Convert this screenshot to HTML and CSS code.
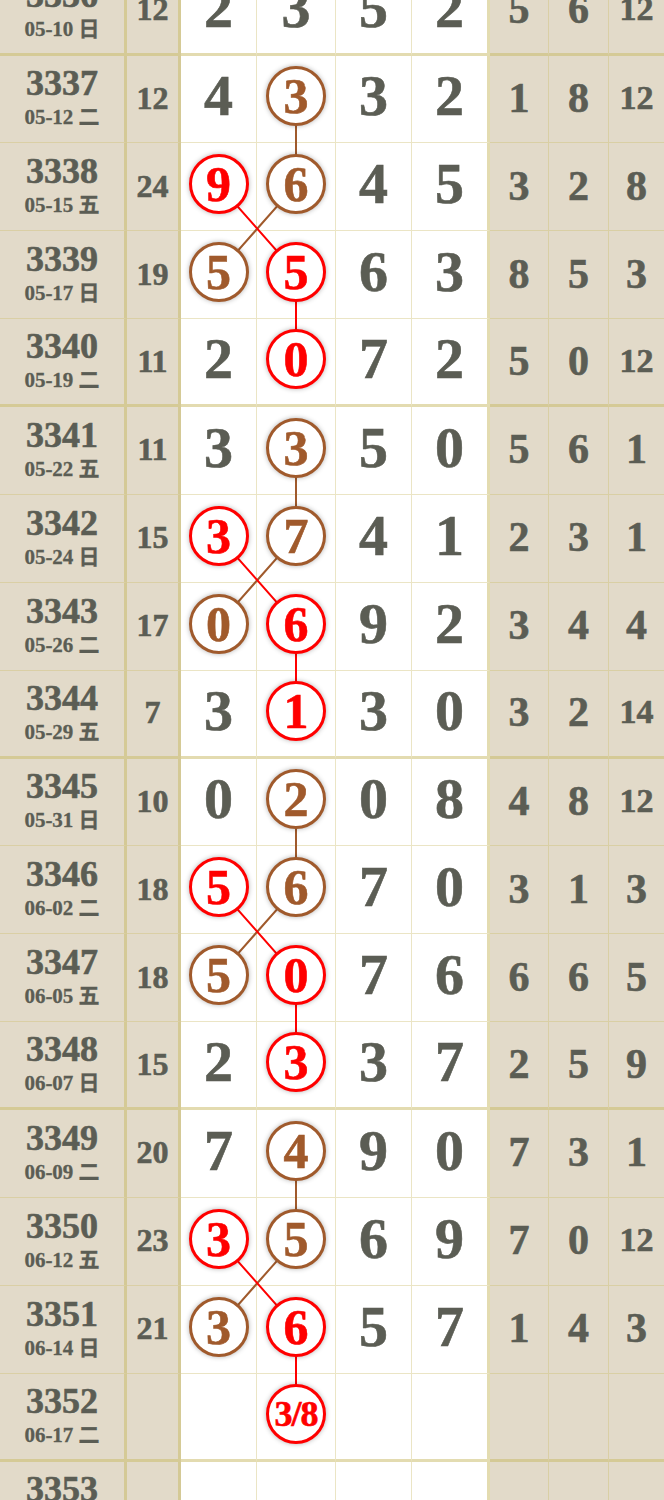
FILE: index.html
```html
<!DOCTYPE html>
<html lang="zh">
<head>
    <meta charset="UTF-8">
    <title>走势图</title>
    <link rel="stylesheet" href="styles.css">
</head>
<body>

<div class="chart">
    <svg class="links" width="664" height="1582" viewBox="0 0 664 1582">
        <g class="brown">
            <path d="M296 128.9 V216.8 L218.5 304.6"/>
            <path d="M296 480.4 V568.3 L218.5 656.1"/>
            <path d="M296 831.9 V919.8 L218.5 1007.6"/>
            <path d="M296 1183.4 V1271.3 L218.5 1359.1"/>
        </g>
        <g class="red">
            <path d="M218.5 216.8 L296 304.6 V392.5"/>
            <path d="M218.5 568.3 L296 656.1 V744"/>
            <path d="M218.5 919.8 L296 1007.6 V1095.5"/>
            <path d="M218.5 1271.3 L296 1359.1 V1447"/>
        </g>
    </svg>

    <div class="row end">
        <div class="c issue"><b>3336</b><small>05-10 日</small></div>
        <div class="c sum">12</div>
        <div class="c n">2</div><div class="c n">3</div><div class="c n">5</div><div class="c n last">2</div>
        <div class="c s">5</div><div class="c s">6</div><div class="c s dd">12</div>
    </div>

    <div class="row">
        <div class="c issue"><b>3337</b><small>05-12 二</small></div>
        <div class="c sum">12</div>
        <div class="c n">4</div><div class="c n"><span class="ball b">3</span></div><div class="c n">3</div><div class="c n last">2</div>
        <div class="c s">1</div><div class="c s">8</div><div class="c s dd">12</div>
    </div>
    <div class="row">
        <div class="c issue"><b>3338</b><small>05-15 五</small></div>
        <div class="c sum">24</div>
        <div class="c n"><span class="ball r">9</span></div><div class="c n"><span class="ball b">6</span></div><div class="c n">4</div><div class="c n last">5</div>
        <div class="c s">3</div><div class="c s">2</div><div class="c s">8</div>
    </div>
    <div class="row">
        <div class="c issue"><b>3339</b><small>05-17 日</small></div>
        <div class="c sum">19</div>
        <div class="c n"><span class="ball b">5</span></div><div class="c n"><span class="ball r">5</span></div><div class="c n">6</div><div class="c n last">3</div>
        <div class="c s">8</div><div class="c s">5</div><div class="c s">3</div>
    </div>
    <div class="row end">
        <div class="c issue"><b>3340</b><small>05-19 二</small></div>
        <div class="c sum">11</div>
        <div class="c n">2</div><div class="c n"><span class="ball r">0</span></div><div class="c n">7</div><div class="c n last">2</div>
        <div class="c s">5</div><div class="c s">0</div><div class="c s dd">12</div>
    </div>

    <div class="row">
        <div class="c issue"><b>3341</b><small>05-22 五</small></div>
        <div class="c sum">11</div>
        <div class="c n">3</div><div class="c n"><span class="ball b">3</span></div><div class="c n">5</div><div class="c n last">0</div>
        <div class="c s">5</div><div class="c s">6</div><div class="c s">1</div>
    </div>
    <div class="row">
        <div class="c issue"><b>3342</b><small>05-24 日</small></div>
        <div class="c sum">15</div>
        <div class="c n"><span class="ball r">3</span></div><div class="c n"><span class="ball b">7</span></div><div class="c n">4</div><div class="c n last">1</div>
        <div class="c s">2</div><div class="c s">3</div><div class="c s">1</div>
    </div>
    <div class="row">
        <div class="c issue"><b>3343</b><small>05-26 二</small></div>
        <div class="c sum">17</div>
        <div class="c n"><span class="ball b">0</span></div><div class="c n"><span class="ball r">6</span></div><div class="c n">9</div><div class="c n last">2</div>
        <div class="c s">3</div><div class="c s">4</div><div class="c s">4</div>
    </div>
    <div class="row end">
        <div class="c issue"><b>3344</b><small>05-29 五</small></div>
        <div class="c sum">7</div>
        <div class="c n">3</div><div class="c n"><span class="ball r">1</span></div><div class="c n">3</div><div class="c n last">0</div>
        <div class="c s">3</div><div class="c s">2</div><div class="c s dd">14</div>
    </div>

    <div class="row">
        <div class="c issue"><b>3345</b><small>05-31 日</small></div>
        <div class="c sum">10</div>
        <div class="c n">0</div><div class="c n"><span class="ball b">2</span></div><div class="c n">0</div><div class="c n last">8</div>
        <div class="c s">4</div><div class="c s">8</div><div class="c s dd">12</div>
    </div>
    <div class="row">
        <div class="c issue"><b>3346</b><small>06-02 二</small></div>
        <div class="c sum">18</div>
        <div class="c n"><span class="ball r">5</span></div><div class="c n"><span class="ball b">6</span></div><div class="c n">7</div><div class="c n last">0</div>
        <div class="c s">3</div><div class="c s">1</div><div class="c s">3</div>
    </div>
    <div class="row">
        <div class="c issue"><b>3347</b><small>06-05 五</small></div>
        <div class="c sum">18</div>
        <div class="c n"><span class="ball b">5</span></div><div class="c n"><span class="ball r">0</span></div><div class="c n">7</div><div class="c n last">6</div>
        <div class="c s">6</div><div class="c s">6</div><div class="c s">5</div>
    </div>
    <div class="row end">
        <div class="c issue"><b>3348</b><small>06-07 日</small></div>
        <div class="c sum">15</div>
        <div class="c n">2</div><div class="c n"><span class="ball r">3</span></div><div class="c n">3</div><div class="c n last">7</div>
        <div class="c s">2</div><div class="c s">5</div><div class="c s">9</div>
    </div>

    <div class="row">
        <div class="c issue"><b>3349</b><small>06-09 二</small></div>
        <div class="c sum">20</div>
        <div class="c n">7</div><div class="c n"><span class="ball b">4</span></div><div class="c n">9</div><div class="c n last">0</div>
        <div class="c s">7</div><div class="c s">3</div><div class="c s">1</div>
    </div>
    <div class="row">
        <div class="c issue"><b>3350</b><small>06-12 五</small></div>
        <div class="c sum">23</div>
        <div class="c n"><span class="ball r">3</span></div><div class="c n"><span class="ball b">5</span></div><div class="c n">6</div><div class="c n last">9</div>
        <div class="c s">7</div><div class="c s">0</div><div class="c s dd">12</div>
    </div>
    <div class="row">
        <div class="c issue"><b>3351</b><small>06-14 日</small></div>
        <div class="c sum">21</div>
        <div class="c n"><span class="ball b">3</span></div><div class="c n"><span class="ball r">6</span></div><div class="c n">5</div><div class="c n last">7</div>
        <div class="c s">1</div><div class="c s">4</div><div class="c s">3</div>
    </div>
    <div class="row end">
        <div class="c issue"><b>3352</b><small>06-17 二</small></div>
        <div class="c sum"></div>
        <div class="c n"></div><div class="c n"><span class="ball r guess">3/8</span></div><div class="c n"></div><div class="c n last"></div>
        <div class="c s"></div><div class="c s"></div><div class="c s"></div>
    </div>

    <div class="row">
        <div class="c issue"><b>3353</b><small>06-20 五</small></div>
        <div class="c sum"></div>
        <div class="c n"></div><div class="c n"></div><div class="c n"></div><div class="c n last"></div>
        <div class="c s"></div><div class="c s"></div><div class="c s"></div>
    </div>
</div>

</body>
</html>
```

FILE: styles.css
```css
body {
    margin: 0;
    background-color: #fff;
    font-family: "Liberation Serif", "Noto Sans CJK SC", serif;
    font-weight: bold;
    color: #5b5d54;
    -webkit-text-stroke: 0.6px currentColor;
}
.chart {
    position: relative;
    width: 664px;
    margin-top: -32.375px;
}
.links {
    position: absolute;
    left: 0;
    top: 0;
    z-index: 1;
}
.links path {
    fill: none;
    stroke-width: 2;
}
.links .brown path {
    stroke: #a05a2c;
}
.links .red path {
    stroke: #ff0000;
}
.row {
    display: grid;
    grid-template-columns: 127px 54px 76px 79px 76px 78px 59px 60px 55px;
    height: 87.875px;
}
.c {
    display: flex;
    align-items: center;
    justify-content: center;
    box-sizing: border-box;
    background-color: #e2dac9;
    border-right: 1px solid rgba(205, 190, 110, 0.4);
    border-bottom: 1px solid rgba(205, 190, 110, 0.4);
    padding-bottom: 2px;
    line-height: 1;
}
.row.end .c {
    border-bottom: 3px solid rgba(200, 185, 100, 0.5);
}
.c:last-child {
    border-right: none;
}
.issue {
    flex-direction: column;
    border-right: 3px solid rgba(200, 185, 100, 0.5);
    padding-bottom: 5px;
}
.issue b {
    font-size: 36px;
    line-height: 42px;
}
.issue small {
    font-size: 21px;
    line-height: 26px;
    white-space: nowrap;
    -webkit-text-stroke: 0.3px currentColor;
}
.sum {
    font-size: 32px;
    border-right: 3px solid rgba(200, 185, 100, 0.5);
}
.n {
    background-color: #fff;
    font-size: 58px;
    padding-bottom: 5px;
}
.n.last {
    border-right: 3px solid rgba(200, 185, 100, 0.5);
}
.s {
    font-size: 42px;
}
.s.dd {
    font-size: 34px;
}
.ball {
    position: relative;
    z-index: 2;
    display: flex;
    align-items: center;
    justify-content: center;
    width: 60px;
    height: 60px;
    box-sizing: border-box;
    border: 3px solid;
    border-radius: 50%;
    background-color: #fff;
    font-size: 50px;
    box-shadow: 0 0 5px rgba(0, 0, 0, 0.3);
}
.ball.b {
    color: #a05a2c;
    border-color: #a05a2c;
}
.ball.r {
    color: #ff0000;
    border-color: #ff0000;
}
.ball.guess {
    font-size: 36px;
    letter-spacing: -1px;
}
```
